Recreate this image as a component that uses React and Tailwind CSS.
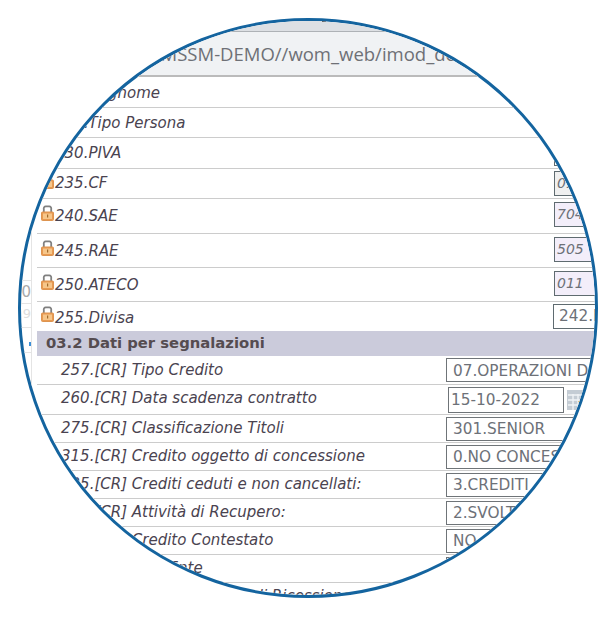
const lock = (
  <svg width="13" height="16" viewBox="0 0 13 16" className="mb-[6px] shrink-0">
    <path d="M2.8 7.5V4a2 2 0 0 1 2-2.6h3.4a2 2 0 0 1 2 2.6v3.5" fill="none" stroke="#808080" strokeWidth="1.8" />
    <rect x="0.5" y="7" width="12" height="8.5" rx="1" fill="#e89a52" stroke="#dd9450" />
    <rect x="2" y="8.5" width="9" height="5.5" fill="#f6c68a" />
    <rect x="6" y="9.5" width="1.2" height="3" fill="#a06a2a" />
  </svg>
);

const topRows = [
  { label: "225.Cognome", h: "h-[31px]", nudge: "mt-[2px]" },
  { label: "228.Tipo Persona", h: "h-[30px]", nudge: "mt-[2px]" },
  { label: "230.PIVA", h: "h-[31px]", empty: true },
  { label: "235.CF", h: "h-[30px]", locked: true, value: "01234", box: "bg-[#f0f0f0]" },
  { label: "240.SAE", h: "h-[35px]", locked: true, value: "704", box: "bg-[#f3eefa]", up: true },
  { label: "245.RAE", h: "h-[34px]", locked: true, value: "505", box: "bg-[#f3eefa]", up: true, nudge: "mt-[2px]" },
  { label: "250.ATECO", h: "h-[34px]", locked: true, value: "011", box: "bg-[#f3eefa]", up: true, nudge: "mt-[2px]" },
  { label: "255.Divisa", h: "h-[29px] border-b-0", locked: true, value: "242.EURO", plain: true, nudge: "mt-[4px]" },
];

const crRows = [
  { label: "257.[CR] Tipo Credito", value: "07.OPERAZIONI DI", h: "h-[29px]" },
  { label: "260.[CR] Data scadenza contratto", value: "15-10-2022", h: "h-[30px]", date: true },
  { label: "275.[CR] Classificazione Titoli", value: "301.SENIOR", h: "h-[28px]" },
  { label: "315.[CR] Credito oggetto di concessione", value: "0.NO CONCESSIONE", h: "h-[28px]" },
  { label: "325.[CR] Crediti ceduti e non cancellati:", value: "3.CREDITI", h: "h-[28px]" },
  { label: "330.[CR] Attività di Recupero:", value: "2.SVOLTA", h: "h-[28px]" },
  { label: "335.[CR] Credito Contestato", value: "NO", h: "h-[28px]" },
  { label: "340.[CR] Tipo Ente", value: "", h: "h-[28px]" },
  { label: "345.[CR] Data Procedura di Ricessione", h: "h-[28px]", none: true },
];

function TopRow({ row }) {
  return (
    <div className={`${row.h} flex items-center border-b border-[#cccccc] pl-[4px]`}>
      {row.locked ? lock : <span className="w-[13px]" />}
      <span className={`ml-[1px] flex-1 text-[15px] italic text-[#4a4350] ${row.nudge || ""}`}>{row.label}</span>
      {row.empty && <span className="h-[25px] w-[83px] shrink-0 border border-[#5f6b70]" />}
      {row.value && (
        <span
          className={`flex h-[25px] shrink-0 items-center overflow-hidden border border-[#5f6b70] whitespace-nowrap text-[#6d7178] ${
            row.plain ? "w-[84px] pl-[5px] text-[15.3px]" : `w-[83px] pl-[2px] text-[14px] italic ${row.box}`
          } ${row.up ? "mb-[3px]" : ""}`}
        >
          {row.value}
        </span>
      )}
    </div>
  );
}

export default function App() {
  return (
    <div className="h-[617px] w-[614px] bg-white pt-[18px] pl-[18px] font-['DejaVu_Sans',sans-serif]">
      <div className="h-[580px] w-[580px] overflow-hidden rounded-full border-[3px] border-[#14649f] bg-white">
        <div className="flex h-full">
          {/* sliver of the left menu */}
          <div className="mr-[5px] w-[11px] shrink-0 border-r border-[#e4e4e4] pt-[259px] text-[#aaaaaa]">
            <div className="h-[24px] border-y border-[#e4e4e4] text-right text-[15px] leading-[22px]">0</div>
            <div className="h-[24px] border-b border-[#e4e4e4] text-right text-[13px] text-[#dddddd]">9</div>
            <div className="flex h-[25px] items-end justify-end border-b border-[#e4e4e4] pb-[6px]">
              <span className="h-[4px] w-[2px] bg-[#3b8fd8]" />
            </div>
          </div>
          <div className="w-[600px] shrink-0">
            <div className="h-[11px] border-b border-[#aeb2b6] bg-[#dde0e4] pl-[285px]">
              <div className="h-px w-[4px] bg-[#333333]" />
            </div>
            <div className="flex h-[45px] items-center border-b-2 border-[#bbbbbb] bg-[#f0f2f4] pl-[110px] font-['Open_Sans',sans-serif] text-[18.5px] whitespace-nowrap text-[#6e7076]">
              //MSSM-DEMO//wom_web/imod_dettaglio
            </div>
            {topRows.map((r) => (
              <TopRow key={r.label} row={r} />
            ))}
            <div className="flex h-[25px] items-center bg-[#cbcbdb] pl-[9px] text-[14.8px] font-bold text-[#554c50]">
              03.2 Dati per segnalazioni
            </div>
            {crRows.map((r) => (
              <div key={r.label} className={`${r.h} flex items-center border-b border-[#cccccc] pl-[24px]`}>
                <span
                  className={`w-[385px] shrink-0 text-[15px] whitespace-nowrap italic text-[#4a4350] ${
                    r.date ? "mb-[2px]" : ""
                  }`}
                >
                  {r.label}
                </span>
                {!r.none && (
                  <span
                    className={`flex shrink-0 items-center border border-[#6f7478] pt-[2px] text-[15.3px] whitespace-nowrap text-[#6d7178] ${
                      r.date ? "ml-[2px] h-[26px] w-[116px] pl-[2px]" : "h-[24px] w-[200px] pl-[6px]"
                    }`}
                  >
                    {r.value}
                  </span>
                )}
                {r.date && (
                  <svg width="20" height="20" viewBox="0 0 20 20" className="ml-[3px] shrink-0">
                    <rect width="20" height="20" fill="#c4ccd4" />
                    <path d="M1 5h18M1 10h18M1 15h18M6 4v16M11 4v16M16 4v16" stroke="#f0f3f6" strokeWidth="1.4" />
                    <path d="M11 11h7l-3 4v4l-1-1v-3z" fill="#f0b840" />
                  </svg>
                )}
              </div>
            ))}
          </div>
        </div>
      </div>
    </div>
  );
}
